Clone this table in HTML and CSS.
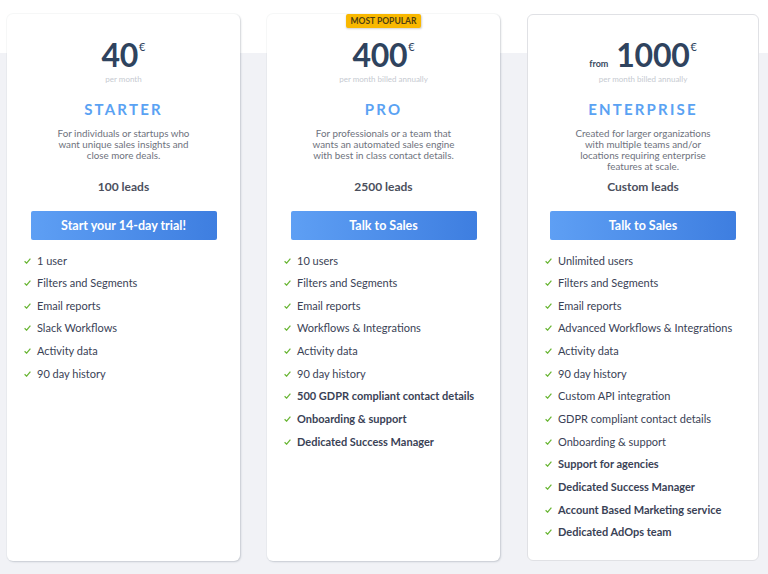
FILE: index.html
```html
<!DOCTYPE html>
<html lang="en">
<head>
<meta charset="utf-8">
<title>Pricing</title>
<link rel="stylesheet" href="styles.css">
</head>
<body>
<main class="pricing">
  <section class="card">
    <div class="price"><span class="amount">40</span><span class="cur">€</span></div>
    <div class="period">per month</div>
    <h2 class="plan">STARTER</h2>
    <p class="desc">For individuals or startups who want unique sales insights and close more deals.</p>
    <div class="leads">100 leads</div>
    <a class="btn">Start your 14-day trial!</a>
    <ul class="features">
      <li>1 user</li>
      <li>Filters and Segments</li>
      <li>Email reports</li>
      <li>Slack Workflows</li>
      <li>Activity data</li>
      <li>90 day history</li>
    </ul>
  </section>

  <section class="card">
    <span class="badge">MOST POPULAR</span>
    <div class="price"><span class="amount">400</span><span class="cur">€</span></div>
    <div class="period">per month billed annually</div>
    <h2 class="plan">PRO</h2>
    <p class="desc">For professionals or a team that wants an automated sales engine with best in class contact details.</p>
    <div class="leads">2500 leads</div>
    <a class="btn">Talk to Sales</a>
    <ul class="features">
      <li>10 users</li>
      <li>Filters and Segments</li>
      <li>Email reports</li>
      <li>Workflows &amp; Integrations</li>
      <li>Activity data</li>
      <li>90 day history</li>
      <li class="strong">500 GDPR compliant contact details</li>
      <li class="strong">Onboarding &amp; support</li>
      <li class="strong">Dedicated Success Manager</li>
    </ul>
  </section>

  <section class="card card-bordered">
    <div class="price"><span class="from">from</span><span class="amount">1000</span><span class="cur">€</span></div>
    <div class="period">per month billed annually</div>
    <h2 class="plan">ENTERPRISE</h2>
    <p class="desc">Created for larger organizations with multiple teams and/or locations requiring enterprise features at scale.</p>
    <div class="leads">Custom leads</div>
    <a class="btn">Talk to Sales</a>
    <ul class="features">
      <li>Unlimited users</li>
      <li>Filters and Segments</li>
      <li>Email reports</li>
      <li>Advanced Workflows &amp; Integrations</li>
      <li>Activity data</li>
      <li>90 day history</li>
      <li>Custom API integration</li>
      <li>GDPR compliant contact details</li>
      <li>Onboarding &amp; support</li>
      <li class="strong">Support for agencies</li>
      <li class="strong">Dedicated Success Manager</li>
      <li class="strong">Account Based Marketing service</li>
      <li class="strong">Dedicated AdOps team</li>
    </ul>
  </section>
</main>
</body>
</html>
```

FILE: styles.css
```css
* { box-sizing: border-box; }

html, body {
  margin: 0;
  padding: 0;
}

body {
  width: 768px;
  height: 574px;
  overflow: hidden;
  font-family: Lato, "Open Sans", Arial, sans-serif;
  background: linear-gradient(#ffffff 0, #ffffff 53px, #f1f2f6 53px);
}

.pricing {
  display: flex;
  gap: 27px;
  padding: 14px 0 0 7px;
}

.card {
  position: relative;
  width: 233px;
  height: 547px;
  background: #ffffff;
  border-radius: 6px;
  box-shadow: 0 0 0 1px rgba(40, 50, 70, 0.03), 1px 1px 2px rgba(40, 50, 70, 0.18);
  display: flex;
  flex-direction: column;
  align-items: center;
  text-align: center;
}

.card-bordered {
  width: 232px;
  box-shadow: none;
  border: 1px solid #e0e1e5;
}

.badge {
  position: absolute;
  top: 0;
  left: 50%;
  transform: translateX(-50%);
  background: #f9b800;
  color: #4f3f12;
  font-size: 8.5px;
  font-weight: 700;
  line-height: 14px;
  padding: 0 5px;
  border-radius: 2px;
  box-shadow: 0 1px 2px rgba(0, 0, 0, 0.18);
  white-space: nowrap;
}

.price {
  margin-top: 25px;
  height: 32px;
  line-height: 32px;
  color: #2f435e;
  display: flex;
  align-items: baseline;
}

.card-bordered .price { margin-top: 24px; }

.amount {
  font-size: 32px;
  font-weight: 700;
  letter-spacing: -0.3px;
}

.cur {
  align-self: flex-start;
  font-size: 11px;
  line-height: 14px;
  margin-top: 1px;
  margin-left: 1px;
}

.from {
  font-size: 9px;
  font-weight: 700;
  margin-right: 8px;
  color: #3a4a60;
}

.period {
  margin-top: 2px;
  font-size: 8px;
  line-height: 12px;
  color: #c6cad1;
}

.plan {
  margin: 15px 0 0;
  font-size: 15px;
  line-height: 18px;
  font-weight: 700;
  letter-spacing: 2.2px;
  color: #5aa2f3;
}

.desc {
  margin: 9.5px 0 0;
  width: 144px;
  height: 44px;
  font-size: 9.8px;
  line-height: 11px;
  color: #6e727d;
}

.leads {
  margin-top: 8.5px;
  font-size: 12px;
  line-height: 14px;
  font-weight: 700;
  color: #4b4f5d;
}

.btn {
  display: block;
  margin-top: 17px;
  width: 186px;
  height: 29px;
  line-height: 29px;
  border-radius: 2px;
  background: linear-gradient(90deg, #5e9ff4, #3e7ee0);
  color: #ffffff;
  font-size: 12.5px;
  font-weight: 700;
}

.features {
  align-self: stretch;
  list-style: none;
  margin: 8.7px 0 0;
  padding: 0 0 0 17px;
  text-align: left;
}

.features li {
  display: flex;
  align-items: center;
  gap: 6px;
  height: 22.67px;
  font-size: 11px;
  color: #3a4256;
}

.features li::before {
  content: "";
  flex: none;
  width: 7px;
  height: 6px;
  margin-top: 1px;
  background: no-repeat center / 7px 6px url("data:image/svg+xml,%3Csvg xmlns='http://www.w3.org/2000/svg' viewBox='0 0 7 6'%3E%3Cpath d='M0.6 3.3 L2.6 5.2 L6.4 0.6' fill='none' stroke='%2368b532' stroke-width='1.2'/%3E%3C/svg%3E");
}

.features li.strong {
  font-weight: 700;
}
```
